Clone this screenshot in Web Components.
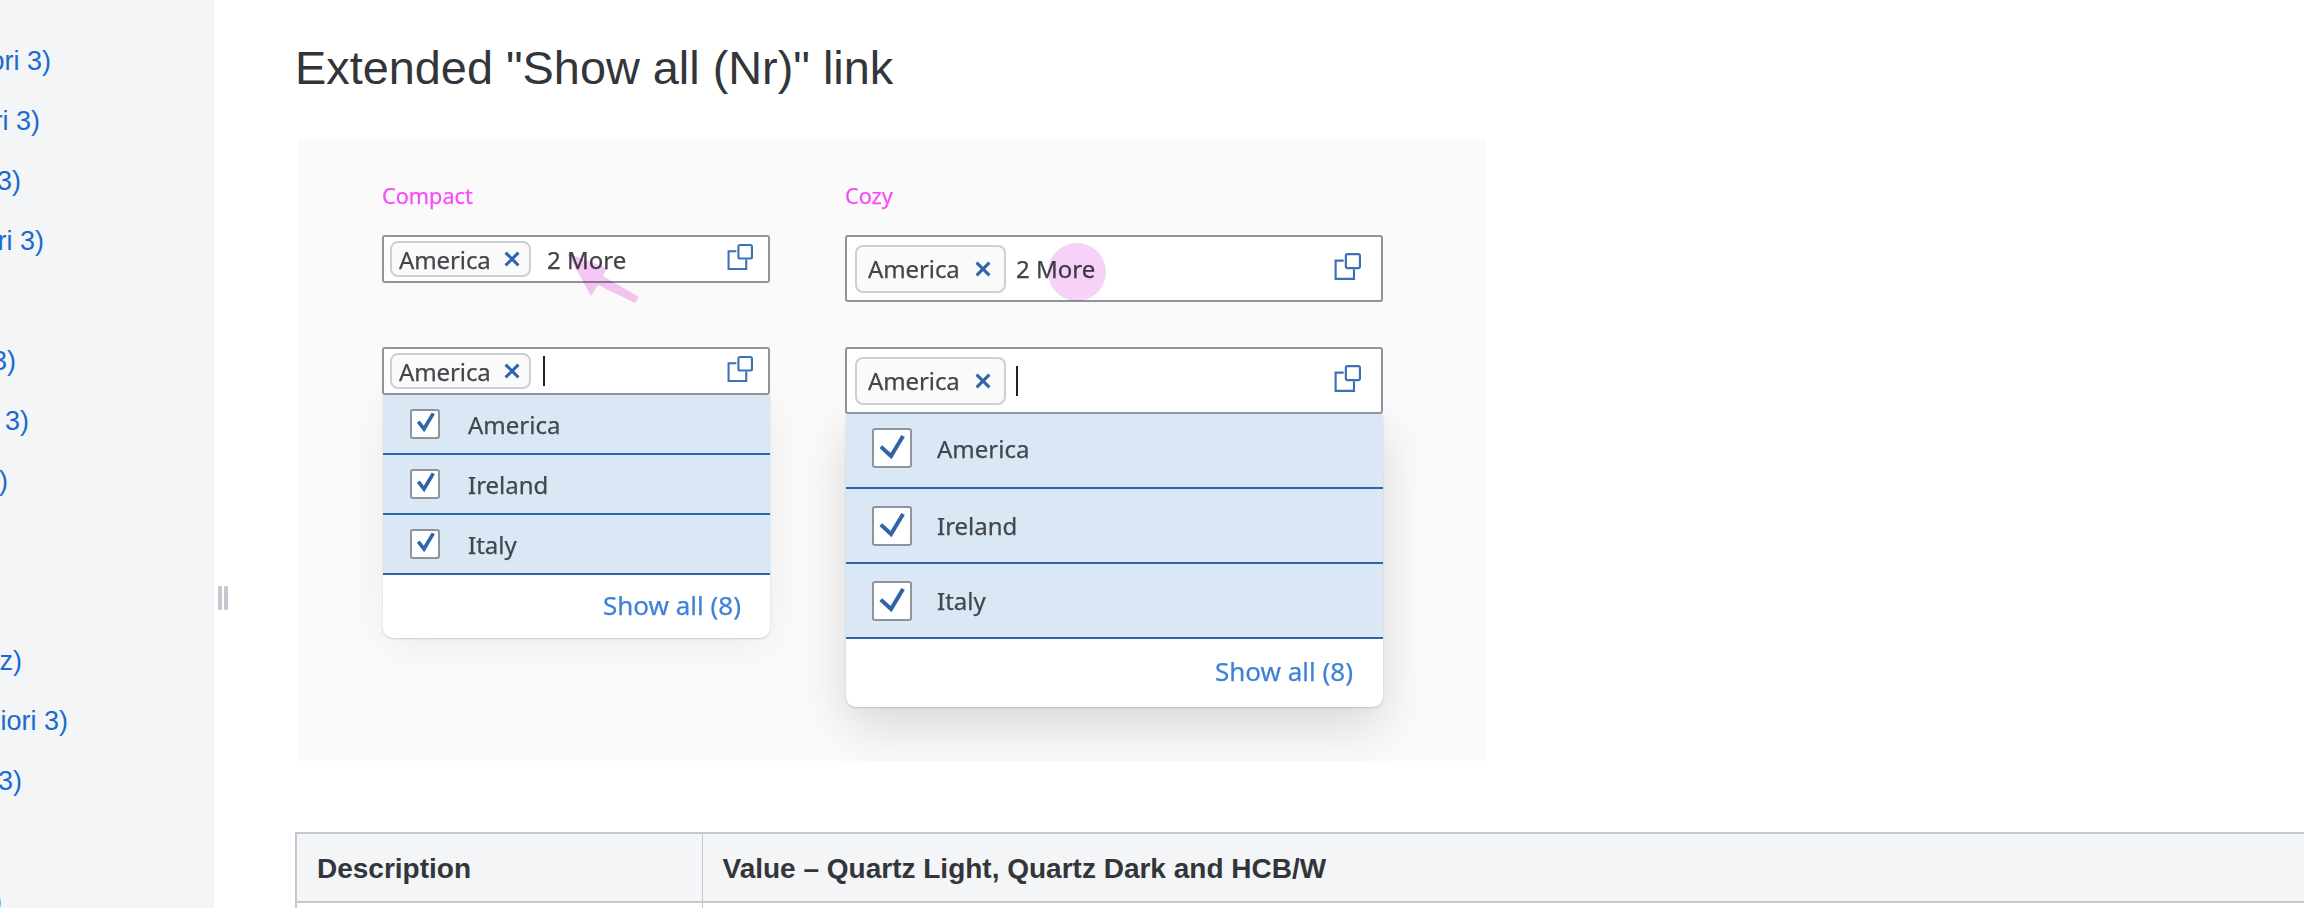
<!DOCTYPE html>
<html><head><meta charset="utf-8"><title>Extended Show all</title>
<style>
html,body{margin:0;padding:0;height:908px;overflow:hidden;background:#fff}
body{font-family:"Liberation Sans",Arial,sans-serif;color:#32363a}
</style></head><body>
<doc-page>
  <side-nav slot="nav">
    <nav-row end="51">ori 3)</nav-row><nav-row end="40">ri 3)</nav-row><nav-row end="21">3)</nav-row><nav-row end="44">ri 3)</nav-row><nav-row></nav-row>
    <nav-row end="16">3)</nav-row><nav-row end="29"> 3)</nav-row><nav-row end="8">)</nav-row><nav-row></nav-row><nav-row></nav-row>
    <nav-row end="22">z)</nav-row><nav-row end="68">iori 3)</nav-row><nav-row end="22">3)</nav-row><nav-row></nav-row><nav-row end="2">)</nav-row>
  </side-nav>
  <page-title>Extended "Show all (Nr)" link</page-title>
  <demo-panel>
    <demo-col size="compact" label="Compact">
      <combo-field size="compact"><tag-chip size="compact">America</tag-chip><more-text size="compact">2 More</more-text></combo-field>
      <pink-arrow></pink-arrow>
      <combo-field size="compact" class="second"><tag-chip size="compact">America</tag-chip><text-caret size="compact"></text-caret></combo-field>
      <combo-list size="compact"><list-item size="compact">America</list-item><list-item size="compact">Ireland</list-item><list-item size="compact">Italy</list-item></combo-list>
    </demo-col>
    <demo-col size="cozy" label="Cozy">
      <combo-field size="cozy"><tag-chip size="cozy">America</tag-chip><more-text size="cozy">2 More</more-text></combo-field>
      <pink-dot></pink-dot>
      <combo-field size="cozy" class="second"><tag-chip size="cozy">America</tag-chip><text-caret size="cozy"></text-caret></combo-field>
      <combo-list size="cozy"><list-item size="cozy">America</list-item><list-item size="cozy">Ireland</list-item><list-item size="cozy">Italy</list-item></combo-list>
    </demo-col>
  </demo-panel>
  <spec-table></spec-table>
</doc-page>
<script>
function def(name,html){
  customElements.define(name,class extends HTMLElement{
    connectedCallback(){
      if(this.shadowRoot)return;
      this.attachShadow({mode:'open'}).innerHTML=typeof html==='function'?html(this):html;
    }
  });
}
const FONT='"Noto Sans","Open Sans",sans-serif';
def('doc-page',`<style>
:host{display:flex;width:2304px;height:908px;overflow:hidden}
.main{flex:1;min-width:0;padding:40px 0 0 81px;position:relative}
.grip{position:absolute;left:4px;top:586px;width:10px;height:24px;display:flex;gap:2px}
.grip i{width:4px;background:#c4c9d0;border-radius:1px}
</style><slot name="nav"></slot><div class="main"><div class="grip"><i></i><i></i></div><slot></slot></div>`);
def('side-nav',`<style>:host{display:block;flex:none;width:214px;height:908px;background:#f3f5f7;overflow:hidden;padding-top:31px;box-sizing:border-box}</style><slot></slot>`);
def('nav-row',h=>`<style>:host{display:flex;justify-content:flex-end;height:60px;font:27px/60px "Liberation Sans",Arial,sans-serif;color:#1a6bd0;white-space:pre;width:${h.getAttribute('end')||0}px}</style><slot></slot>`);
def('page-title',`<style>:host{display:block;font:46.85px/56px "Liberation Sans",Arial,sans-serif;color:#32363a;white-space:nowrap}</style><slot></slot>`);
def('demo-panel',`<style>:host{display:flex;box-sizing:border-box;margin:43px 0 0 3px;width:1188px;height:622px;background:#fafafa;padding:0 0 0 84px;gap:75px;overflow:hidden;filter:blur(.6px);-webkit-text-stroke:.25px currentColor}</style><slot></slot>`);
def('demo-col',h=>`<style>
:host{display:flex;flex-direction:column;position:relative;flex:none;width:${h.getAttribute('size')==='compact'?388:538}px;padding-top:42px;box-sizing:border-box}
.l{font:21.7px/30px ${FONT};color:#f64df8;margin-bottom:24px;height:30px}
</style><div class="l">${h.getAttribute('label')}</div><slot></slot>`);
def('combo-field',h=>{const c=h.getAttribute('size')==='compact';return `<style>
:host{display:flex;align-items:center;box-sizing:border-box;width:100%;height:${c?48:67}px;flex:none;background:#fff;border:2px solid #8e949e;border-radius:3px;padding:0 ${c?15:20}px 0 ${c?6:8}px;position:relative;z-index:2;font:24px ${FONT};color:#3f4348}
:host(.second){margin-top:${c?64:45}px}
svg{margin-left:auto;flex:none;width:${c?26:27}px;height:${c?26:27}px;position:relative;top:-2px}
</style><slot></slot><svg viewBox="0 0 25 25" fill="none" stroke="#3a72b5" stroke-width="2"><path d="M9 7H1.5V24H18.5V15"/><rect x="11" y="1" width="13" height="13" rx="1.5"/></svg>`});
def('tag-chip',h=>{const c=h.getAttribute('size')==='compact';return `<style>
:host{display:flex;align-items:center;box-sizing:border-box;flex:none;width:${c?141:151}px;height:${c?36:48}px;background:#fafafa;border:2px solid #cfcfcf;border-radius:8px;padding-left:${c?7:11}px;font:24px ${FONT};color:#43474c;letter-spacing:-.1px}
svg{width:16px;height:16px;margin-left:${c?13:15}px;flex:none}
</style><slot></slot><svg viewBox="0 0 15 15" stroke="#2f64a8" stroke-width="2.8" fill="none"><path d="M1.5 1.5L13.5 13.5M13.5 1.5L1.5 13.5"/></svg>`});
def('more-text',h=>`<style>:host{display:block;margin-left:${h.getAttribute('size')==='compact'?16:10}px;font:24px ${FONT};color:#3f4348}</style><slot></slot>`);
def('text-caret',h=>`<style>:host{display:block;width:2px;height:30px;margin-left:${h.getAttribute('size')==='compact'?12:10}px;background:#222}</style>`);
def('combo-list',h=>{const c=h.getAttribute('size')==='compact';return `<style>
:host{display:flex;flex-direction:column;box-sizing:border-box;width:${c?387:537}px;margin-left:1px;background:#fff;border-radius:0 0 10px 10px;box-shadow:${c?'0 6px 44px rgba(0,0,0,.06)':'0 18px 50px rgba(0,0,0,.14)'},0 1px 2px rgba(0,0,0,.16);position:relative;z-index:1;font:24px ${FONT}}
.s{height:${c?63:68}px;box-sizing:border-box;padding-bottom:${c?3:5}px;display:flex;align-items:center;justify-content:flex-end;padding-right:${c?29:30}px;color:#3f82d6;font-size:26px}
</style><slot></slot><div class="s">Show all (8)</div>`});
def('list-item',h=>{const c=h.getAttribute('size')==='compact';return `<style>
:host{display:flex;align-items:center;box-sizing:border-box;height:${c?60:75}px;background:#dae7f5;border-bottom:2px solid #2f64a8;padding-left:${c?27:26}px;font:24px ${FONT};color:#43474c}
:host(:first-child){padding-bottom:${c?0:5}px}
.b{box-sizing:border-box;flex:none;width:${c?30:40}px;height:${c?30:40}px;background:#fff;border:2px solid #8e949e;border-radius:3px;margin-right:${c?28:25}px}
svg{display:block;width:100%;height:100%}
</style><div class="b"><svg viewBox="0 0 26 26" fill="none" stroke="#2f64a8" stroke-width="${c?3.6:2.9}"><path d="${c?'M6.3 10.7L12 18L21.3 2.3':'M4.9 12L12.3 18.8L21 4.3'}"/></svg></div><slot></slot>`});
def('pink-arrow',`<style>:host{display:block;position:absolute;left:0;top:0;z-index:5;width:388px;height:200px;pointer-events:none;mix-blend-mode:multiply}svg{width:100%;height:100%;display:block}</style>
<svg viewBox="0 0 388 200"><path d="M185 114L225 129L221 137L257 158L253 164L216 146L209 157Z" fill="#f5c8f2"/></svg>`);
def('pink-dot',`<style>:host{display:block;position:absolute;left:203px;top:104px;width:58px;height:58px;border-radius:50%;background:#f6d2f8;z-index:5;mix-blend-mode:multiply}</style>`);
def('spec-table',`<style>
:host{display:block;margin-top:71px;width:2100px;font:bold 28px "Liberation Sans",Arial,sans-serif;color:#32363a}
.g{display:grid;grid-template-columns:405.5px 1fr;border-left:2px solid #c3c8d0;border-top:2px solid #c3c8d0}
.h{background:#f3f5f7;height:69px;display:flex;align-items:center;box-sizing:border-box;padding:2px 0 0 20px;border-bottom:2px solid #c3c8d0;border-right:1px solid #c3c8d0}
.c{height:40px;border-right:1px solid #c3c8d0}
</style><div class="g"><div class="h">Description</div><div class="h">Value – Quartz Light, Quartz Dark and HCB/W</div><div class="c"></div><div class="c"></div></div>`);
</script>
</body></html>
